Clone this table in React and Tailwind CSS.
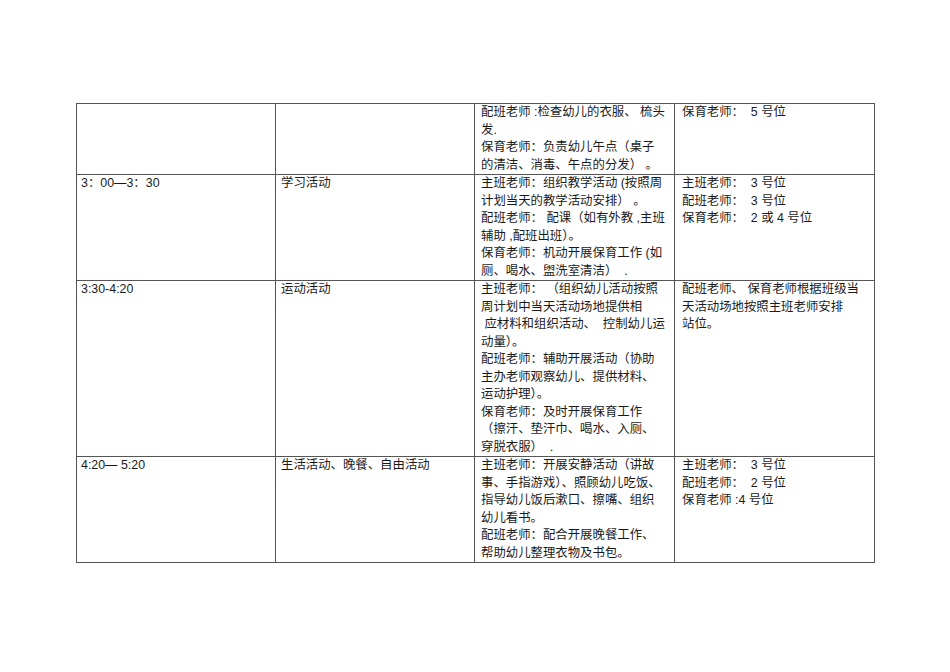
import React from "react";

// each cell is a list of lines, breaks kept as in the source document
const rows = [
  {
    time: [""],
    name: [""],
    duty: [
      "配班老师 :检查幼儿的衣服、 梳头",
      "发.",
      "保育老师：负责幼儿午点（桌子",
      "的清洁、消毒、午点的分发） 。",
    ],
    place: ["保育老师：  5 号位"],
  },
  {
    time: ["3：00—3：30"],
    name: ["学习活动"],
    duty: [
      "主班老师：组织教学活动 (按照周",
      "计划当天的教学活动安排） 。",
      "配班老师： 配课（如有外教 ,主班",
      "辅助 ,配班出班）。",
      "保育老师：机动开展保育工作 (如",
      "厕、喝水、盥洗室清洁）  .",
    ],
    place: ["主班老师：  3 号位", "配班老师：  3 号位", "保育老师：  2 或 4 号位"],
  },
  {
    time: ["3:30-4:20"],
    name: ["运动活动"],
    duty: [
      "主班老师： （组织幼儿活动按照",
      "周计划中当天活动场地提供相",
      " 应材料和组织活动、  控制幼儿运",
      "动量）。",
      "配班老师：辅助开展活动（协助",
      "主办老师观察幼儿、提供材料、",
      "运动护理）。",
      "保育老师：及时开展保育工作",
      "（擦汗、垫汗巾、喝水、入厕、",
      "穿脱衣服）  .",
    ],
    place: ["配班老师、 保育老师根据班级当", "天活动场地按照主班老师安排", "站位。"],
  },
  {
    time: ["4:20— 5:20"],
    name: ["生活活动、晚餐、自由活动"],
    duty: [
      "主班老师：开展安静活动（讲故",
      "事、手指游戏）、照顾幼儿吃饭、",
      "指导幼儿饭后漱口、擦嘴、组织",
      "幼儿看书。",
      "配班老师：配合开展晚餐工作、",
      "帮助幼儿整理衣物及书包。",
    ],
    place: ["主班老师：  3 号位", "配班老师：  2 号位", "保育老师 :4 号位"],
  },
];

const Cell = ({ lines, pad }) => (
  <td className={`border border-[#555] align-top p-0 ${pad}`}>
    {lines.map((l, i) => (
      <div key={i} className="whitespace-pre h-[17.5px] leading-[17.5px]">
        {l}
      </div>
    ))}
  </td>
);

const App = () => {
  return (
    <div
      className="w-[950px] h-[672px] bg-white text-[#1a1a1a] text-[12.4px] pt-[103px] pl-[76px]"
      style={{ fontFamily: '"Liberation Sans", "Noto Sans CJK SC", sans-serif' }}
    >
      <table className="border-collapse table-fixed w-[798px]">
        <colgroup>
          <col className="w-[199px]" />
          <col className="w-[199px]" />
          <col className="w-[200px]" />
          <col className="w-[200px]" />
        </colgroup>
        <tbody>
          {rows.map((r, i) => (
            <tr key={i}>
              <Cell lines={r.time} pad="pl-[4px]" />
              <Cell lines={r.name} pad="pl-[5px]" />
              <Cell lines={r.duty} pad="pl-[6px]" />
              <Cell lines={r.place} pad="pl-[7px]" />
            </tr>
          ))}
        </tbody>
      </table>
    </div>
  );
};

export default App;
